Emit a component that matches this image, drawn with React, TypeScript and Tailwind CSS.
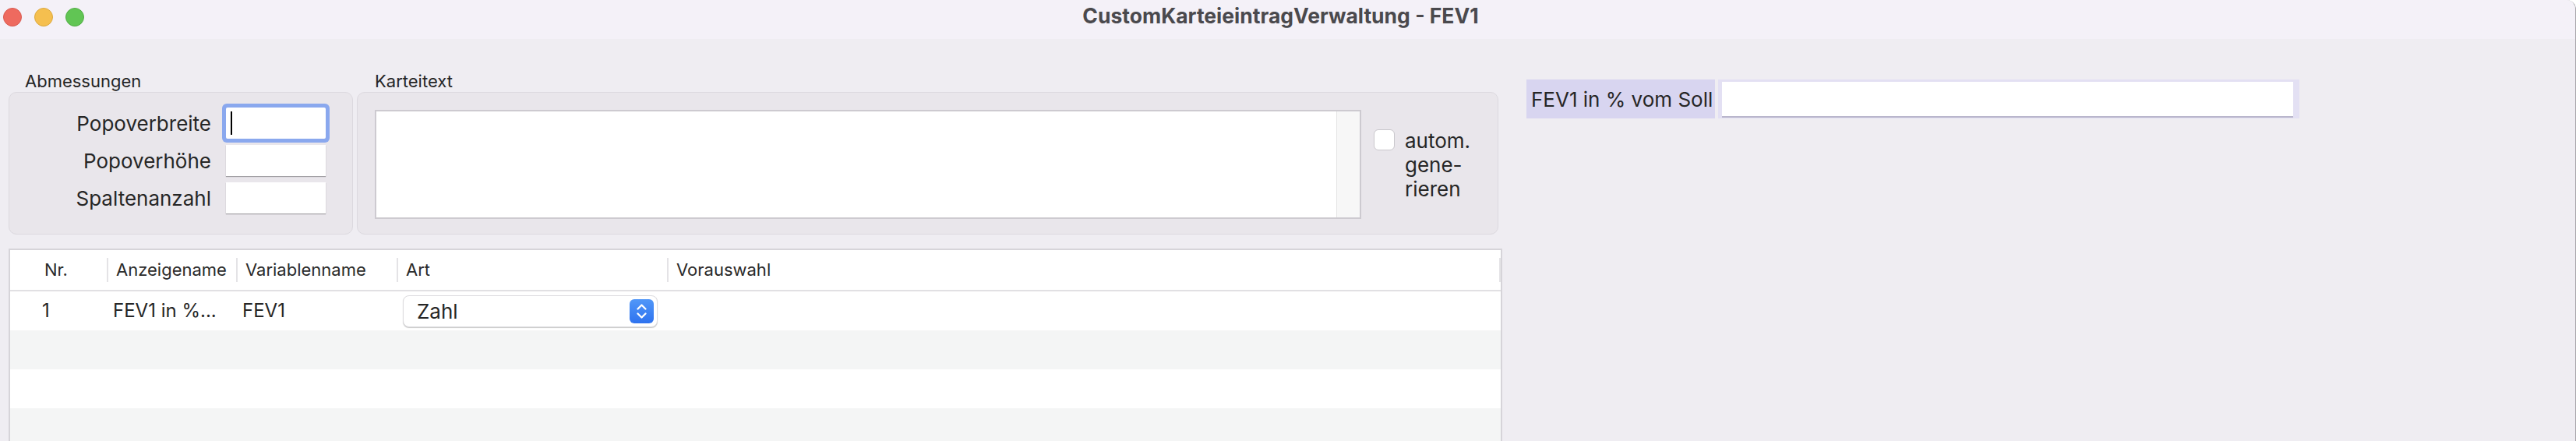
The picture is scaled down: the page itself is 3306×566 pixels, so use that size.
import React from 'react';

const dims = ['Popoverbreite', 'Popoverhöhe', 'Spaltenanzahl'];

const cols = [
  { title: 'Nr.', first: true },
  { title: 'Anzeigename' },
  { title: 'Variablenname' },
  { title: 'Art' },
  { title: 'Vorauswahl', last: true },
];

const Stepper: React.FC = () => (
  <div className="ml-auto mr-[4px] w-[31px] h-[31px] rounded-[6px] bg-gradient-to-b from-[#5197f8] to-[#2e72ef] flex items-center justify-center">
    <svg width="31" height="31" viewBox="0 0 31 31" fill="none" stroke="white" strokeWidth="2.3" strokeLinecap="round" strokeLinejoin="round">
      <path d="M10.5 12.5 L15.5 7.5 L20.5 12.5" />
      <path d="M10.5 18.5 L15.5 23.5 L20.5 18.5" />
    </svg>
  </div>
);

const App: React.FC = () => {
  return (
    <div className="w-[3306px] h-[566px] overflow-hidden bg-[#efedf2] font-['Inter',sans-serif] text-[#262626] border-r border-[#a8a6ab] rounded-tr-[12px]">
      {/* title bar */}
      <div className="h-[50px] bg-[#f4f1f8] grid grid-cols-[1fr_auto_1fr] items-start pr-[18px]">
        <div className="flex gap-[16px] pt-[10px] pl-[4px]">
          <div className="w-[24px] h-[24px] rounded-full bg-[#ee6a5f] border border-[#d95a50]" />
          <div className="w-[24px] h-[24px] rounded-full bg-[#f5bf4f] border border-[#dca93f]" />
          <div className="w-[24px] h-[24px] rounded-full bg-[#61c554] border border-[#52ad46]" />
        </div>
        <div className="pt-[5px] leading-[30px] text-[26.5px] font-bold text-[#4a494d]">CustomKarteieintragVerwaltung - FEV1</div>
        <div />
      </div>

      <div className="flex items-start">
        {/* left column */}
        <div className="w-[1928px] pl-[11px] pt-[41px]">
          <div className="flex gap-[5px]">
            <div className="w-[442px]">
              <div className="h-[27px] leading-[27px] pl-[21px] text-[22px]">Abmessungen</div>
              <div className="h-[183px] rounded-[10px] bg-[#e9e6eb] border border-[#dcd9df] pt-[19px] flex flex-col gap-[8px]">
                {dims.map((d, i) => (
                  <div key={d} className="flex items-center h-[40px]">
                    <div className="w-[259px] text-right text-[26px]">{d}</div>
                    <div className={`ml-[19px] w-[128px] h-[40px] bg-white shadow-[0_1px_1px_rgba(0,0,0,0.3)] flex items-center ${i === 0 ? 'ring-[5px] ring-[#8aa8ee] rounded-[2px]' : ''}`}>
                      {i === 0 && <div className="ml-[6px] w-[2px] h-[30px] bg-black" />}
                    </div>
                  </div>
                ))}
              </div>
            </div>

            <div className="w-[1465px]">
              <div className="h-[27px] leading-[27px] pl-[23px] text-[22px]">Karteitext</div>
              <div className="h-[183px] rounded-[10px] bg-[#e9e6eb] border border-[#dcd9df] pl-[22px] pt-[22px] flex items-start">
                <div className="w-[1266px] h-[140px] border-2 border-[#cdcad0] bg-white flex">
                  <div className="flex-1" />
                  <div className="w-[30px] bg-[#f7f7f7] border-l border-[#e4e4e4]" />
                </div>
                <div className="ml-[16px] mt-[24px] flex items-start">
                  <div className="mt-[1px] w-[27px] h-[27px] rounded-[6px] bg-white border border-[#c9c7cc]" />
                  <div className="ml-[13px] text-[26px] leading-[31px]">
                    autom.<br />gene-<br />rieren
                  </div>
                </div>
              </div>
            </div>
          </div>

          {/* table */}
          <div className="mt-[18px] w-[1917px] h-[260px] border-2 border-[#d6d4d9] bg-white">
            <div className="h-[53px] grid grid-cols-[124px_166px_206px_347px_1fr] border-b-2 border-[#e1e0e3] text-[22px] text-[#2a2a2a]">
              {cols.map(c => (
                <div key={c.title} className="flex items-center">
                  {c.first ? (
                    <span className="pl-[44px]">{c.title}</span>
                  ) : (
                    <>
                      <div className="w-[2px] h-[31px] bg-[#e4e3e6]" />
                      <span className="ml-[10px]">{c.title}</span>
                      {c.last && <div className="ml-auto w-[2px] h-[31px] bg-[#e4e3e6]" />}
                    </>
                  )}
                </div>
              ))}
            </div>
            <div className="h-[50px] grid grid-cols-[124px_166px_206px_347px_1fr] items-center text-[24px]">
              <span className="pl-[41px]">1</span>
              <span className="pl-[8px] whitespace-nowrap">FEV1 in %...</span>
              <span className="pl-[8px]">FEV1</span>
              <div className="ml-[8px] w-[327px] h-[41px] rounded-[8px] bg-white border border-[#dddcdf] shadow-[0_1px_1px_rgba(0,0,0,0.22)] flex items-center">
                <span className="pl-[17px] text-[26px]">Zahl</span>
                <Stepper />
              </div>
              <div />
            </div>
            <div className="h-[50px] bg-[#f4f5f5]" />
            <div className="h-[50px] bg-white" />
            <div className="h-[50px] bg-[#f4f5f5]" />
          </div>
        </div>

        {/* right column */}
        <div className="ml-[31px] pt-[52px] flex">
          <div className="w-[242px] h-[50px] bg-[#d8d5f0] pl-[6px] text-[26px] whitespace-nowrap flex items-center">FEV1 in % vom Soll</div>
          <div className="ml-[4px] w-[746px] h-[50px] bg-[#e3e0f3] pl-[5px] pr-[8px] pt-[3px] pb-[1px]">
            <div className="h-full bg-white border-b-2 border-[#b9b6cc]" />
          </div>
        </div>
      </div>
    </div>
  );
};

export default App;
